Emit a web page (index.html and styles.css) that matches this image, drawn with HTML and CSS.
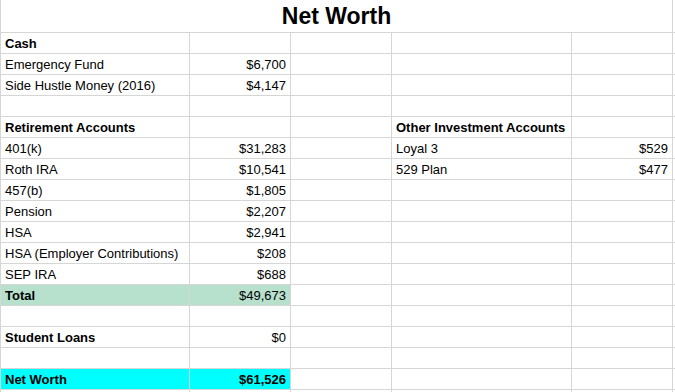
FILE: index.html
```html
<!DOCTYPE html>
<html>
<head>
<meta charset="utf-8">
<link rel="stylesheet" href="styles.css">
</head>
<body>
<div class="sheet">
  <div class="cell title">Net Worth</div><div class="cell"></div>

  <div class="cell b">Cash</div><div class="cell"></div><div class="cell"></div><div class="cell"></div><div class="cell"></div><div class="cell"></div>
  <div class="cell">Emergency Fund</div><div class="cell r">$6,700</div><div class="cell"></div><div class="cell"></div><div class="cell"></div><div class="cell"></div>
  <div class="cell">Side Hustle Money (2016)</div><div class="cell r">$4,147</div><div class="cell"></div><div class="cell"></div><div class="cell"></div><div class="cell"></div>
  <div class="cell"></div><div class="cell"></div><div class="cell"></div><div class="cell"></div><div class="cell"></div><div class="cell"></div>
  <div class="cell b">Retirement Accounts</div><div class="cell"></div><div class="cell"></div><div class="cell b">Other Investment Accounts</div><div class="cell"></div><div class="cell"></div>
  <div class="cell">401(k)</div><div class="cell r">$31,283</div><div class="cell"></div><div class="cell">Loyal 3</div><div class="cell r">$529</div><div class="cell"></div>
  <div class="cell">Roth IRA</div><div class="cell r">$10,541</div><div class="cell"></div><div class="cell">529 Plan</div><div class="cell r">$477</div><div class="cell"></div>
  <div class="cell">457(b)</div><div class="cell r">$1,805</div><div class="cell"></div><div class="cell"></div><div class="cell"></div><div class="cell"></div>
  <div class="cell">Pension</div><div class="cell r">$2,207</div><div class="cell"></div><div class="cell"></div><div class="cell"></div><div class="cell"></div>
  <div class="cell">HSA</div><div class="cell r">$2,941</div><div class="cell"></div><div class="cell"></div><div class="cell"></div><div class="cell"></div>
  <div class="cell">HSA (Employer Contributions)</div><div class="cell r">$208</div><div class="cell"></div><div class="cell"></div><div class="cell"></div><div class="cell"></div>
  <div class="cell">SEP IRA</div><div class="cell r">$688</div><div class="cell"></div><div class="cell"></div><div class="cell"></div><div class="cell"></div>
  <div class="cell b green">Total</div><div class="cell r green">$49,673</div><div class="cell"></div><div class="cell"></div><div class="cell"></div><div class="cell"></div>
  <div class="cell"></div><div class="cell"></div><div class="cell"></div><div class="cell"></div><div class="cell"></div><div class="cell"></div>
  <div class="cell b">Student Loans</div><div class="cell r">$0</div><div class="cell"></div><div class="cell"></div><div class="cell"></div><div class="cell"></div>
  <div class="cell"></div><div class="cell"></div><div class="cell"></div><div class="cell"></div><div class="cell"></div><div class="cell"></div>
  <div class="cell b cyan">Net Worth</div><div class="cell r b cyan">$61,526</div><div class="cell"></div><div class="cell"></div><div class="cell"></div><div class="cell"></div>
  <div class="cell"></div><div class="cell"></div><div class="cell"></div><div class="cell"></div><div class="cell"></div><div class="cell"></div>
</div>
</body>
</html>
```

FILE: styles.css
```css
html, body {
  margin: 0;
  padding: 0;
  background: #fff;
  overflow: hidden;
}
.sheet {
  display: grid;
  grid-template-columns: 188px 100px 100px 179px 100px 20px;
  grid-template-rows: 32px;
  grid-auto-rows: 20px;
  gap: 1px;
  padding-left: 1px;
  background: #d6d6d6;
  width: 700px;
  font-family: "Liberation Sans", Arial, sans-serif;
  font-size: 13px;
  color: #000;
}
.cell {
  background: #fff;
  padding: 1px 4px 0 4px;
  line-height: 20px;
  white-space: nowrap;
  overflow: hidden;
}
.title {
  grid-column: 1 / 6;
  text-align: center;
  font-weight: bold;
  font-size: 23px;
  line-height: 32px;
  padding-top: 0;
}
.b { font-weight: bold; }
.r { text-align: right; }
.green { background: #b7e1cd; }
.cyan { background: #00ffff; }
```
